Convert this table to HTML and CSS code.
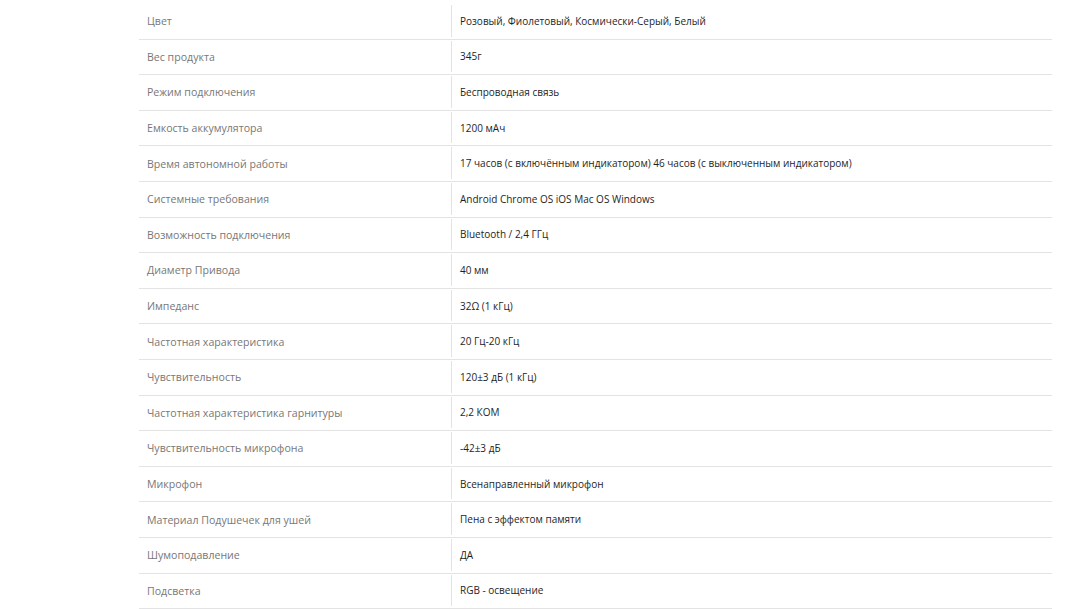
FILE: index.html
```html
<!DOCTYPE html>
<html lang="ru">
<head>
<meta charset="utf-8">
<title>Характеристики</title>
<link rel="stylesheet" href="styles.css">
</head>
<body>
<div class="specs">
  <div class="row"><div class="label">Цвет</div><div class="value">Розовый, Фиолетовый, Космически-Серый, Белый</div></div>
  <div class="row"><div class="label">Вес продукта</div><div class="value">345г</div></div>
  <div class="row"><div class="label">Режим подключения</div><div class="value">Беспроводная связь</div></div>
  <div class="row"><div class="label">Емкость аккумулятора</div><div class="value">1200 мАч</div></div>
  <div class="row"><div class="label">Время автономной работы</div><div class="value">17 часов (с включённым индикатором) 46 часов (с выключенным индикатором)</div></div>
  <div class="row"><div class="label">Системные требования</div><div class="value">Android Chrome OS iOS Mac OS Windows</div></div>
  <div class="row"><div class="label">Возможность подключения</div><div class="value">Bluetooth / 2,4 ГГц</div></div>
  <div class="row"><div class="label">Диаметр Привода</div><div class="value">40 мм</div></div>
  <div class="row"><div class="label">Импеданс</div><div class="value">32Ω (1 кГц)</div></div>
  <div class="row"><div class="label">Частотная характеристика</div><div class="value">20 Гц-20 кГц</div></div>
  <div class="row"><div class="label">Чувствительность</div><div class="value">120±3 дБ (1 кГц)</div></div>
  <div class="row"><div class="label">Частотная характеристика гарнитуры</div><div class="value">2,2 КОМ</div></div>
  <div class="row"><div class="label">Чувствительность микрофона</div><div class="value">-42±3 дБ</div></div>
  <div class="row"><div class="label">Микрофон</div><div class="value">Всенаправленный микрофон</div></div>
  <div class="row"><div class="label">Материал Подушечек для ушей</div><div class="value">Пена с эффектом памяти</div></div>
  <div class="row"><div class="label">Шумоподавление</div><div class="value">ДА</div></div>
  <div class="row"><div class="label">Подсветка</div><div class="value">RGB - освещение</div></div>
</div>
</body>
</html>
```

FILE: styles.css
```css
html, body {
  margin: 0;
  padding: 0;
  background: #fff;
}
body {
  font-family: "Open Sans", "Liberation Sans", sans-serif;
  font-size: 11px;
}
.specs {
  width: 913px;
  margin: 4px 0 0 139px;
}
.row {
  display: flex;
  height: 35.6px;
  box-sizing: border-box;
  border-bottom: 1px solid #e3e3e3;
}
.label {
  width: 312px;
  box-sizing: border-box;
  padding-left: 8px;
  display: flex;
  align-items: center;
  color: #777;
  font-size: 10.6px;
}
.value {
  flex: 1;
  margin: 1px 0 2px;
  padding-left: 8px;
  border-left: 1px solid #e3e3e3;
  display: flex;
  align-items: center;
  color: #1e1e1e;
  font-size: 10px;
}
```
